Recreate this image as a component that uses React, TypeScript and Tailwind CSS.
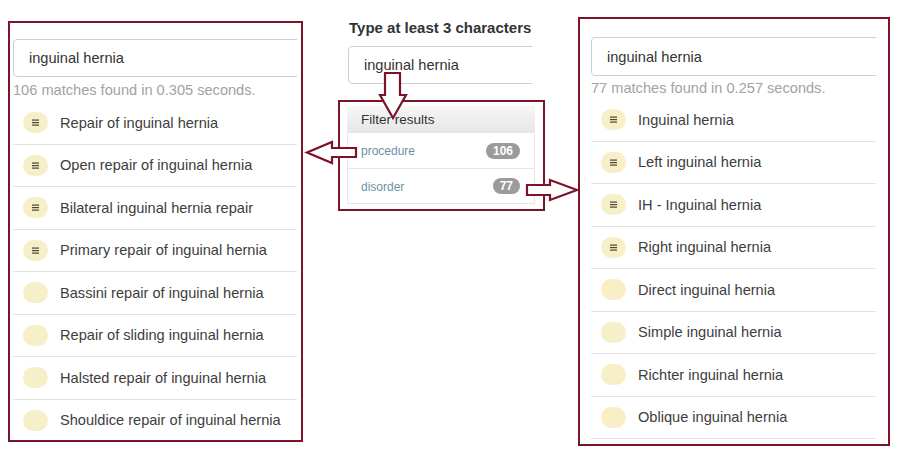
import React from "react";

const MAROON = "#7b1429";

type Item = { label: string; icon: boolean };

const procedures: Item[] = [
  { label: "Repair of inguinal hernia", icon: true },
  { label: "Open repair of inguinal hernia", icon: true },
  { label: "Bilateral inguinal hernia repair", icon: true },
  { label: "Primary repair of inguinal hernia", icon: true },
  { label: "Bassini repair of inguinal hernia", icon: false },
  { label: "Repair of sliding inguinal hernia", icon: false },
  { label: "Halsted repair of inguinal hernia", icon: false },
  { label: "Shouldice repair of inguinal hernia", icon: false },
];

const disorders: Item[] = [
  { label: "Inguinal hernia", icon: true },
  { label: "Left inguinal hernia", icon: true },
  { label: "IH - Inguinal hernia", icon: true },
  { label: "Right inguinal hernia", icon: true },
  { label: "Direct inguinal hernia", icon: false },
  { label: "Simple inguinal hernia", icon: false },
  { label: "Richter inguinal hernia", icon: false },
  { label: "Oblique inguinal hernia", icon: false },
];

function ListIcon() {
  return (
    <svg width="7" height="7" viewBox="0 0 7 7" className="block">
      <rect x="0" y="0.5" width="7" height="1.2" fill="#4d4531" />
      <rect x="0" y="3" width="7" height="1.2" fill="#4d4531" />
      <rect x="0" y="5.5" width="7" height="1.2" fill="#4d4531" />
    </svg>
  );
}

function ResultRow({ item }: { item: Item }) {
  return (
    <div className="flex h-[42.5px] shrink-0 items-center border-b border-[#e3e3e3]">
      <div className="ml-[10px] flex h-[21px] w-[25px] items-center justify-center rounded-full bg-[#f7efc8]">
        {item.icon && <ListIcon />}
      </div>
      <span className="ml-[12px] whitespace-nowrap pt-[2px] text-[14.6px] text-[#3d3d3d]">
        {item.label}
      </span>
    </div>
  );
}

function SearchInput({ width, height }: { width: number; height: string }) {
  return (
    <div
      className={
        "flex items-center rounded-[4px] border border-[#cfcfcf] bg-white pl-[15px] pt-[2px] text-[14.6px] text-[#333] " +
        height
      }
      style={{ width }}
    >
      inguinal hernia
    </div>
  );
}

function Badge({ n }: { n: string }) {
  return (
    <span className="flex h-[16px] items-center rounded-full bg-[#9b9b9b] px-[7px] text-[12px] font-bold leading-none text-white">
      {n}
    </span>
  );
}

export default function App() {
  return (
    <div
      className="relative h-[454px] w-[900px] overflow-hidden bg-white"
      style={{ fontFamily: '"Liberation Sans", Arial, sans-serif' }}
    >
      <div className="flex items-start">
        {/* Procedure results */}
        <div className="ml-[8px] mt-[21px] h-[421px] w-[295px] overflow-hidden border-2 border-[#7b1429]">
          <div className="ml-[3px] mt-[16px] w-[284px] overflow-hidden">
            <SearchInput width={300} height="h-[38px]" />
            <div className="flex h-[25px] items-center whitespace-nowrap pt-[2px] text-[14.6px] text-[#a2a2a2]">
              106 matches found in 0.305 seconds.
            </div>
            <div className="flex flex-col">
              {procedures.map((p) => (
                <ResultRow key={p.label} item={p} />
              ))}
            </div>
          </div>
        </div>

        {/* Search box and facet filter */}
        <div className="ml-[35px] w-[207px]">
          <div className="mt-[18px] flex h-[20px] items-center whitespace-nowrap pl-[11px] text-[15px] font-bold text-[#333]">
            Type at least 3 characters
          </div>
          <div className="ml-[10px] mt-[8px] w-[184px] overflow-hidden">
            <SearchInput width={200} height="h-[38px]" />
          </div>
          <div className="mt-[16px] h-[111px] border-2 border-[#7b1429] pl-[7px] pt-[4px]">
            <div className="w-[188px]">
              <div className="flex h-[27px] items-center bg-gradient-to-b from-[#f7f7f7] to-[#e6e6e6] pl-[14px] pt-[2px] text-[13.5px] text-[#333]">
                Filter results
              </div>
              <div className="border-x border-[#e6e6e6]">
                <div className="flex h-[36px] items-center justify-between border-b border-[#e6e6e6] pl-[13px] pr-[14px] text-[12px] text-[#6b93a6]">
                  <span className="pt-[1px]">procedure</span>
                  <Badge n="106" />
                </div>
                <div className="flex h-[35px] items-center justify-between border-b border-[#e6e6e6] pl-[13px] pr-[14px] text-[12px] text-[#6b93a6]">
                  <span className="pt-[1px]">disorder</span>
                  <Badge n="77" />
                </div>
              </div>
            </div>
          </div>
        </div>

        {/* Disorder results */}
        <div className="ml-[33px] mt-[17px] h-[429px] w-[312px] overflow-hidden border-2 border-[#7b1429]">
          <div className="ml-[11px] mt-[18px] w-[285px] overflow-hidden">
            <SearchInput width={300} height="h-[39px]" />
            <div className="flex h-[23px] items-center whitespace-nowrap pt-[3px] text-[14.6px] text-[#a2a2a2]">
              77 matches found in 0.257 seconds.
            </div>
            <div className="flex flex-col">
              {disorders.map((d) => (
                <ResultRow key={d.label} item={d} />
              ))}
            </div>
          </div>
        </div>
      </div>

      {/* Hollow arrows drawn over the panels */}
      <svg
        className="pointer-events-none absolute left-0 top-0"
        width="900"
        height="454"
        viewBox="0 0 900 454"
      >
        <polygon
          points="385,73 400,73 400,95 406,95 393,118 380,95 385,95"
          fill="white"
          stroke={MAROON}
          strokeWidth="2.2"
        />
        <polygon
          points="356,148 332,148 332,142 307,152.5 332,163 332,157 356,157"
          fill="white"
          stroke={MAROON}
          strokeWidth="2.2"
        />
        <polygon
          points="527,185 550,185 550,180 577,190 550,200 550,195 527,195"
          fill="white"
          stroke={MAROON}
          strokeWidth="2.2"
        />
      </svg>
    </div>
  );
}
